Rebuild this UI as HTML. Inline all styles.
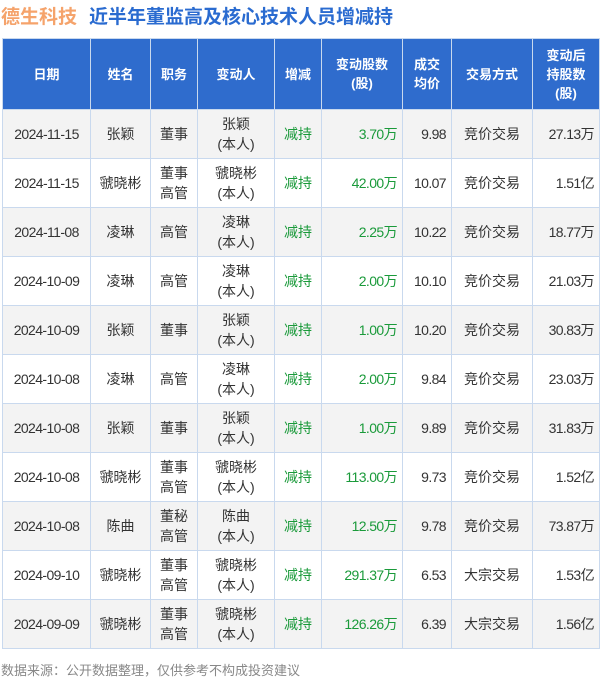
<!DOCTYPE html>
<html><head><meta charset="utf-8"><style>
body{margin:0;width:600px;height:679px;background:#fff;font-family:"Liberation Sans","Noto Sans CJK SC",sans-serif;position:relative;overflow:hidden}
.t{position:absolute;left:1px;top:2px;font-size:19px;font-weight:bold;color:#2a6bd0;white-space:nowrap}
.t span{color:#f5a36b;margin-right:12px}
table{position:absolute;left:2px;top:38px;border-collapse:collapse;table-layout:fixed;font-size:14px;color:#333}
td,th{border:1px solid #c9d9ee;text-align:center;padding:0;line-height:20px}
th{background:#2f6ccd;color:#fff;font-weight:bold;height:70px;font-size:13px;line-height:19px}
td{height:48px}
tr:nth-child(even) td{background:#f3f3f3}
.n{letter-spacing:-0.6px}
.g{color:#1a9a3a}
.r{text-align:right;padding-right:5px}
.f{position:absolute;left:1px;top:660px;font-size:13px;color:#888}
</style></head><body>
<div class="t"><span>德生科技</span>近半年董监高及核心技术人员增减持</div>
<table>
<colgroup><col style="width:88px"><col style="width:60px"><col style="width:47px"><col style="width:77px"><col style="width:47px"><col style="width:81px"><col style="width:49px"><col style="width:81px"><col style="width:67px"></colgroup>
<tr><th>日期</th><th>姓名</th><th>职务</th><th>变动人</th><th>增减</th><th>变动股数<br>(股)</th><th>成交<br>均价</th><th>交易方式</th><th>变动后<br>持股数<br>(股)</th></tr>
<tr><td class="n">2024-11-15</td><td>张颖</td><td>董事</td><td>张颖<br>(本人)</td><td class="g">减持</td><td class="g r n">3.70万</td><td class="r n">9.98</td><td>竞价交易</td><td class="r n">27.13万</td></tr>
<tr><td class="n">2024-11-15</td><td>虢晓彬</td><td>董事<br>高管</td><td>虢晓彬<br>(本人)</td><td class="g">减持</td><td class="g r n">42.00万</td><td class="r n">10.07</td><td>竞价交易</td><td class="r n">1.51亿</td></tr>
<tr><td class="n">2024-11-08</td><td>凌琳</td><td>高管</td><td>凌琳<br>(本人)</td><td class="g">减持</td><td class="g r n">2.25万</td><td class="r n">10.22</td><td>竞价交易</td><td class="r n">18.77万</td></tr>
<tr><td class="n">2024-10-09</td><td>凌琳</td><td>高管</td><td>凌琳<br>(本人)</td><td class="g">减持</td><td class="g r n">2.00万</td><td class="r n">10.10</td><td>竞价交易</td><td class="r n">21.03万</td></tr>
<tr><td class="n">2024-10-09</td><td>张颖</td><td>董事</td><td>张颖<br>(本人)</td><td class="g">减持</td><td class="g r n">1.00万</td><td class="r n">10.20</td><td>竞价交易</td><td class="r n">30.83万</td></tr>
<tr><td class="n">2024-10-08</td><td>凌琳</td><td>高管</td><td>凌琳<br>(本人)</td><td class="g">减持</td><td class="g r n">2.00万</td><td class="r n">9.84</td><td>竞价交易</td><td class="r n">23.03万</td></tr>
<tr><td class="n">2024-10-08</td><td>张颖</td><td>董事</td><td>张颖<br>(本人)</td><td class="g">减持</td><td class="g r n">1.00万</td><td class="r n">9.89</td><td>竞价交易</td><td class="r n">31.83万</td></tr>
<tr><td class="n">2024-10-08</td><td>虢晓彬</td><td>董事<br>高管</td><td>虢晓彬<br>(本人)</td><td class="g">减持</td><td class="g r n">113.00万</td><td class="r n">9.73</td><td>竞价交易</td><td class="r n">1.52亿</td></tr>
<tr><td class="n">2024-10-08</td><td>陈曲</td><td>董秘<br>高管</td><td>陈曲<br>(本人)</td><td class="g">减持</td><td class="g r n">12.50万</td><td class="r n">9.78</td><td>竞价交易</td><td class="r n">73.87万</td></tr>
<tr><td class="n">2024-09-10</td><td>虢晓彬</td><td>董事<br>高管</td><td>虢晓彬<br>(本人)</td><td class="g">减持</td><td class="g r n">291.37万</td><td class="r n">6.53</td><td>大宗交易</td><td class="r n">1.53亿</td></tr>
<tr><td class="n">2024-09-09</td><td>虢晓彬</td><td>董事<br>高管</td><td>虢晓彬<br>(本人)</td><td class="g">减持</td><td class="g r n">126.26万</td><td class="r n">6.39</td><td>大宗交易</td><td class="r n">1.56亿</td></tr>
</table>
<div class="f">数据来源：公开数据整理，仅供参考不构成投资建议</div>
</body></html>
